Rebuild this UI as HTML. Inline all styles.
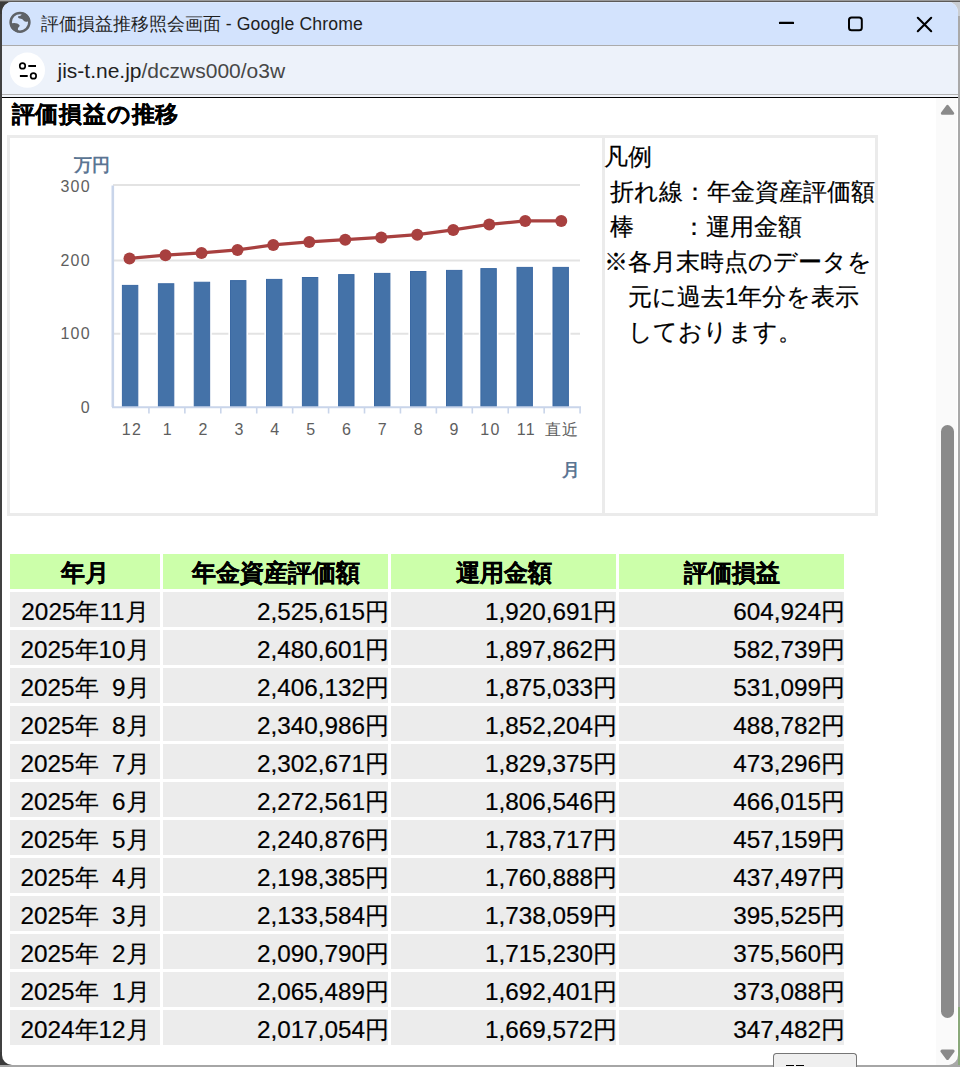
<!DOCTYPE html>
<html><head><meta charset="utf-8">
<style>
html,body{margin:0;padding:0;}
body{width:960px;height:1067px;overflow:hidden;position:relative;background:#a9a9a9;font-family:"Liberation Sans",sans-serif;color:#000;}
.abs{position:absolute;}
#bgleft{position:absolute;left:0;top:0;width:3px;height:1067px;background:#414141;}
#bgtop{position:absolute;left:0;top:0;width:960px;height:1px;background:#9a9a9a;}
#bgtop2{position:absolute;left:0;top:1px;width:960px;height:1px;background:#5c5a58;}
#bgbottom{position:absolute;left:0;top:1065px;width:960px;height:2px;background:#a6a6a6;}
#bggreen{position:absolute;left:958px;top:1007px;width:2px;height:58px;background:#8aa97a;}
#win{position:absolute;left:2px;top:2px;width:956px;height:1063px;background:#fff;border-radius:10px;overflow:hidden;}
#title{position:absolute;left:0;top:0;width:956px;height:43px;background:#d3e3fd;}
#title .hl{position:absolute;left:0;top:0;width:956px;height:1px;background:#dce9fd;}
#tsep{position:absolute;left:0;top:43px;width:956px;height:1px;background:#ababab;}
#addr{position:absolute;left:0;top:44px;width:956px;height:48px;background:#edf2fa;}
#asep{position:absolute;left:0;top:92px;width:956px;height:1px;background:#b3b3b3;}
#asep2{position:absolute;left:0;top:93px;width:956px;height:2px;background:#f1f4fa;}
#blk{position:absolute;left:0;top:95px;width:956px;height:1px;background:#000;}
.ttxt{position:absolute;left:38.6px;top:12px;font-size:17.65px;line-height:20px;color:#1f1f1f;white-space:nowrap;}
.url{position:absolute;left:55.5px;top:12.8px;font-size:21px;line-height:24px;color:#1f1f1f;white-space:nowrap;}
.url .g{color:#474747;}
#scroll{position:absolute;left:934px;top:96px;width:22px;height:967px;background:#fafafa;}
#thumb{position:absolute;left:939px;top:423px;width:13px;height:593px;background:#8a8a8a;border-radius:6.5px;}
/* page */
.h1{position:absolute;left:11.6px;top:100.2px;font-size:23.2px;letter-spacing:0.8px;line-height:28px;font-weight:bold;-webkit-text-stroke:0.25px #000;white-space:nowrap;}
.box{position:absolute;background:#ebebeb;}
.xl{position:absolute;top:419px;width:60px;text-align:center;font-size:16px;line-height:22px;color:#5e5e5e;letter-spacing:1.3px;text-indent:1.3px;}
.yl{position:absolute;width:41px;text-align:right;font-size:16px;line-height:20px;color:#5e5e5e;letter-spacing:1.3px;}
.unit{position:absolute;font-size:17.8px;line-height:20px;font-weight:bold;color:#5b7593;}
.leg{position:absolute;font-size:24px;-webkit-text-stroke:0.2px #000;line-height:26px;white-space:pre;}
.th{position:absolute;top:554px;height:35px;background:#ccffaa;font-weight:bold;font-size:24.4px;line-height:37.5px;-webkit-text-stroke:0.25px #000;text-align:center;white-space:nowrap;}
.td{position:absolute;height:35px;background:#ececec;-webkit-text-stroke:0.2px #000;font-size:24.3px;line-height:39.4px;white-space:nowrap;}
.td.c{text-align:center;}
.td.r{text-align:right;}
.td.r span{position:relative;left:1px;}
#btn{position:absolute;left:773px;top:1053px;width:84px;height:14px;border:1.25px solid #767676;border-bottom:none;border-radius:3.5px 3.5px 0 0;background:#efefef;box-sizing:border-box;overflow:hidden;}
</style></head><body>
<div id="bgleft"></div><div id="bgtop"></div><div id="bgtop2"></div><div id="bgbottom"></div><div id="bggreen"></div><div class="abs" style="left:946px;top:2px;width:14px;height:14px;background:#c9cdd2"></div><div class="abs" style="left:0;top:2px;width:12px;height:12px;background:#3a3a3a"></div><div class="abs" style="left:0;top:1052px;width:12px;height:13px;background:#3a3a3a"></div>
<div id="win">
  <div id="title"><div class="hl"></div>
    <svg class="abs" style="left:0;top:0" width="956" height="43">
      <!-- globe -->
      <g transform="translate(18,20.3) scale(1.03)">
        <circle cx="0" cy="0" r="9.1" fill="none" stroke="#5f6368" stroke-width="2.5"/>
        <path d="M-9.5,1.2 C-6,0 -2,0.5 -0.6,2.6 C0.4,4 -2,4.6 -2,6.5 L-2,9.8 C-6,9 -9,6 -9.5,1.2 Z" fill="#5f6368"/>
        <path d="M2,-9.8 C2,-7 0.8,-6 -1.6,-5.8 C-2.4,-5.5 -2.3,-3.8 0.8,-3.4 C3.5,-3 3.4,0 6.5,-0.6 C8,-1 9.4,-1.5 9.6,-3 C8.5,-6.5 6,-9.2 2,-9.8 Z" fill="#5f6368"/>
      </g>
      <!-- minimize -->
      <rect x="777" y="19.8" width="15" height="2.2" rx="0.6" fill="#000"/>
      <!-- maximize -->
      <rect x="847" y="15.5" width="12.8" height="12.8" rx="2.6" fill="none" stroke="#000" stroke-width="2"/>
      <!-- close -->
      <path d="M915.8,15.8 L929.2,29.2 M929.2,15.8 L915.8,29.2" stroke="#000" stroke-width="2.1" stroke-linecap="round"/>
    </svg>
    <div class="ttxt">評価損益推移照会画面<span style="letter-spacing:0.14px"> - Google Chrome</span></div>
  </div>
  <div id="tsep"></div>
  <div id="addr">
    <svg class="abs" style="left:0;top:0" width="100" height="48">
      <circle cx="25.4" cy="24.2" r="17.6" fill="#fff"/>
      <circle cx="20.5" cy="19.9" r="2.75" fill="none" stroke="#000" stroke-width="1.7"/>
      <line x1="26.3" y1="19.9" x2="34" y2="19.9" stroke="#000" stroke-width="2"/>
      <line x1="17.9" y1="29.9" x2="25.7" y2="29.9" stroke="#000" stroke-width="2"/>
      <circle cx="31.4" cy="29.9" r="2.75" fill="none" stroke="#000" stroke-width="1.7"/>
    </svg>
    <div class="url">jis-t.ne.jp<span class="g">/dczws000/o3w</span></div>
  </div>
  <div id="asep"></div><div id="asep2"></div><div id="blk"></div>
</div>
<!-- page content in page coords -->
<div class="h1">評価損益の推移</div>
<!-- chart box borders -->
<div class="box" style="left:7px;top:135px;width:871px;height:3px"></div>
<div class="box" style="left:7px;top:513px;width:871px;height:3px"></div>
<div class="box" style="left:7px;top:135px;width:3px;height:381px"></div>
<div class="box" style="left:875px;top:135px;width:3px;height:381px"></div>
<div class="box" style="left:602px;top:135px;width:3px;height:381px"></div>
<svg class="abs" style="left:0;top:0" width="960" height="1067">
<line x1="113" y1="185" x2="580" y2="185" stroke="#e3e3e3" stroke-width="2"/>
<line x1="113" y1="260.5" x2="580" y2="260.5" stroke="#e3e3e3" stroke-width="2"/>
<line x1="113" y1="333.75" x2="580" y2="333.75" stroke="#e3e3e3" stroke-width="2"/>
<rect x="120.30" y="283.29999999999995" width="19.599999999999998" height="123.20" fill="#fff"/>
<rect x="122.40" y="285.4" width="15.399999999999999" height="121.10" fill="#4472a8" stroke="#3b69a3" stroke-width="1"/>
<rect x="156.30" y="281.65" width="19.599999999999998" height="124.85" fill="#fff"/>
<rect x="158.40" y="283.75" width="15.399999999999999" height="122.75" fill="#4472a8" stroke="#3b69a3" stroke-width="1"/>
<rect x="192.15" y="280.15" width="19.599999999999998" height="126.35" fill="#fff"/>
<rect x="194.25" y="282.25" width="15.399999999999999" height="124.25" fill="#4472a8" stroke="#3b69a3" stroke-width="1"/>
<rect x="228.40" y="278.5" width="19.599999999999998" height="128.00" fill="#fff"/>
<rect x="230.50" y="280.6" width="15.399999999999999" height="125.90" fill="#4472a8" stroke="#3b69a3" stroke-width="1"/>
<rect x="264.40" y="277.29999999999995" width="19.599999999999998" height="129.20" fill="#fff"/>
<rect x="266.50" y="279.4" width="15.399999999999999" height="127.10" fill="#4472a8" stroke="#3b69a3" stroke-width="1"/>
<rect x="300.30" y="275.4" width="19.599999999999998" height="131.10" fill="#fff"/>
<rect x="302.40" y="277.5" width="15.399999999999999" height="129.00" fill="#4472a8" stroke="#3b69a3" stroke-width="1"/>
<rect x="336.50" y="272.5" width="19.599999999999998" height="134.00" fill="#fff"/>
<rect x="338.60" y="274.6" width="15.399999999999999" height="131.90" fill="#4472a8" stroke="#3b69a3" stroke-width="1"/>
<rect x="372.40" y="271.29999999999995" width="19.599999999999998" height="135.20" fill="#fff"/>
<rect x="374.50" y="273.4" width="15.399999999999999" height="133.10" fill="#4472a8" stroke="#3b69a3" stroke-width="1"/>
<rect x="408.40" y="269.4" width="19.599999999999998" height="137.10" fill="#fff"/>
<rect x="410.50" y="271.5" width="15.399999999999999" height="135.00" fill="#4472a8" stroke="#3b69a3" stroke-width="1"/>
<rect x="444.40" y="268.29999999999995" width="19.599999999999998" height="138.20" fill="#fff"/>
<rect x="446.50" y="270.4" width="15.399999999999999" height="136.10" fill="#4472a8" stroke="#3b69a3" stroke-width="1"/>
<rect x="478.80" y="266.5" width="19.599999999999998" height="140.00" fill="#fff"/>
<rect x="480.90" y="268.6" width="15.399999999999999" height="137.90" fill="#4472a8" stroke="#3b69a3" stroke-width="1"/>
<rect x="514.90" y="265.29999999999995" width="19.599999999999998" height="141.20" fill="#fff"/>
<rect x="517.00" y="267.4" width="15.399999999999999" height="139.10" fill="#4472a8" stroke="#3b69a3" stroke-width="1"/>
<rect x="550.90" y="265.29999999999995" width="19.599999999999998" height="141.20" fill="#fff"/>
<rect x="553.00" y="267.4" width="15.399999999999999" height="139.10" fill="#4472a8" stroke="#3b69a3" stroke-width="1"/>
<line x1="112.8" y1="185.5" x2="112.8" y2="407" stroke="#c9d5ea" stroke-width="2.6"/>
<line x1="112" y1="407.2" x2="581" y2="407.2" stroke="#c9d5ea" stroke-width="2"/>
<line x1="148.93" y1="407" x2="148.93" y2="413.5" stroke="#c9d5ea" stroke-width="1.6"/>
<line x1="184.86" y1="407" x2="184.86" y2="413.5" stroke="#c9d5ea" stroke-width="1.6"/>
<line x1="220.79" y1="407" x2="220.79" y2="413.5" stroke="#c9d5ea" stroke-width="1.6"/>
<line x1="256.72" y1="407" x2="256.72" y2="413.5" stroke="#c9d5ea" stroke-width="1.6"/>
<line x1="292.65" y1="407" x2="292.65" y2="413.5" stroke="#c9d5ea" stroke-width="1.6"/>
<line x1="328.58" y1="407" x2="328.58" y2="413.5" stroke="#c9d5ea" stroke-width="1.6"/>
<line x1="364.51" y1="407" x2="364.51" y2="413.5" stroke="#c9d5ea" stroke-width="1.6"/>
<line x1="400.44" y1="407" x2="400.44" y2="413.5" stroke="#c9d5ea" stroke-width="1.6"/>
<line x1="436.37" y1="407" x2="436.37" y2="413.5" stroke="#c9d5ea" stroke-width="1.6"/>
<line x1="472.30" y1="407" x2="472.30" y2="413.5" stroke="#c9d5ea" stroke-width="1.6"/>
<line x1="508.23" y1="407" x2="508.23" y2="413.5" stroke="#c9d5ea" stroke-width="1.6"/>
<line x1="544.16" y1="407" x2="544.16" y2="413.5" stroke="#c9d5ea" stroke-width="1.6"/>
<line x1="580.09" y1="407" x2="580.09" y2="413.5" stroke="#c9d5ea" stroke-width="1.6"/>
<path d="M129.5,258.4 L165.5,255.15 L201.5,252.9 L237.5,249.9 L273.25,244.9 L309.25,241.9 L345.25,239.65 L381.25,237.4 L417.25,234.65 L453.25,229.9 L489.25,224.4 L525.25,220.9 L561.25,220.9" fill="none" stroke="#a8403f" stroke-width="3.2" stroke-linejoin="round"/>
<circle cx="129.5" cy="258.4" r="6" fill="#a8403f"/>
<circle cx="165.5" cy="255.15" r="6" fill="#a8403f"/>
<circle cx="201.5" cy="252.9" r="6" fill="#a8403f"/>
<circle cx="237.5" cy="249.9" r="6" fill="#a8403f"/>
<circle cx="273.25" cy="244.9" r="6" fill="#a8403f"/>
<circle cx="309.25" cy="241.9" r="6" fill="#a8403f"/>
<circle cx="345.25" cy="239.65" r="6" fill="#a8403f"/>
<circle cx="381.25" cy="237.4" r="6" fill="#a8403f"/>
<circle cx="417.25" cy="234.65" r="6" fill="#a8403f"/>
<circle cx="453.25" cy="229.9" r="6" fill="#a8403f"/>
<circle cx="489.25" cy="224.4" r="6" fill="#a8403f"/>
<circle cx="525.25" cy="220.9" r="6" fill="#a8403f"/>
<circle cx="561.25" cy="220.9" r="6" fill="#a8403f"/>
</svg>
<div class="unit" style="left:74px;top:154.5px">万円</div>
<div class="yl" style="left:50px;top:177px">300</div>
<div class="yl" style="left:50px;top:251px">200</div>
<div class="yl" style="left:50px;top:324px">100</div>
<div class="yl" style="left:50px;top:398px">0</div>
<div class="xl" style="left:101.35px">12</div>
<div class="xl" style="left:137.20px">1</div>
<div class="xl" style="left:173.05px">2</div>
<div class="xl" style="left:208.90px">3</div>
<div class="xl" style="left:244.75px">4</div>
<div class="xl" style="left:280.60px">5</div>
<div class="xl" style="left:316.45px">6</div>
<div class="xl" style="left:352.30px">7</div>
<div class="xl" style="left:388.15px">8</div>
<div class="xl" style="left:424.00px">9</div>
<div class="xl" style="left:459.85px">10</div>
<div class="xl" style="left:495.70px">11</div>
<div class="xl" style="left:531.55px">直近</div>
<div class="unit" style="left:562px;top:460px">月</div>
<div class="leg" style="left:603.8px;top:144px">凡例</div>
<div class="leg" style="left:603.8px;top:179px"> 折れ線：年金資産評価額</div>
<div class="leg" style="left:603.8px;top:214px"> 棒　　：運用金額</div>
<div class="leg" style="left:603.8px;top:249px">※各月末時点のデータを</div>
<div class="leg" style="left:603.8px;top:284px">　元に過去1年分を表示</div>
<div class="leg" style="left:603.8px;top:319px">　しております。</div>
<!-- table -->
<div class="th" style="left:10px;width:150px">年月</div>
<div class="th" style="left:163px;width:225px">年金資産評価額</div>
<div class="th" style="left:391px;width:225px">運用金額</div>
<div class="th" style="left:619px;width:225px">評価損益</div>
<div class="td c" style="left:10px;top:592px;width:150px">2025年11月</div>
<div class="td r" style="left:163px;top:592px;width:225px"><span>2,525,615円</span></div>
<div class="td r" style="left:391px;top:592px;width:225px"><span>1,920,691円</span></div>
<div class="td r" style="left:619px;top:592px;width:225px"><span>604,924円</span></div>
<div class="td c" style="left:10px;top:630px;width:150px">2025年10月</div>
<div class="td r" style="left:163px;top:630px;width:225px"><span>2,480,601円</span></div>
<div class="td r" style="left:391px;top:630px;width:225px"><span>1,897,862円</span></div>
<div class="td r" style="left:619px;top:630px;width:225px"><span>582,739円</span></div>
<div class="td c" style="left:10px;top:668px;width:150px">2025年&nbsp;&nbsp;9月</div>
<div class="td r" style="left:163px;top:668px;width:225px"><span>2,406,132円</span></div>
<div class="td r" style="left:391px;top:668px;width:225px"><span>1,875,033円</span></div>
<div class="td r" style="left:619px;top:668px;width:225px"><span>531,099円</span></div>
<div class="td c" style="left:10px;top:706px;width:150px">2025年&nbsp;&nbsp;8月</div>
<div class="td r" style="left:163px;top:706px;width:225px"><span>2,340,986円</span></div>
<div class="td r" style="left:391px;top:706px;width:225px"><span>1,852,204円</span></div>
<div class="td r" style="left:619px;top:706px;width:225px"><span>488,782円</span></div>
<div class="td c" style="left:10px;top:744px;width:150px">2025年&nbsp;&nbsp;7月</div>
<div class="td r" style="left:163px;top:744px;width:225px"><span>2,302,671円</span></div>
<div class="td r" style="left:391px;top:744px;width:225px"><span>1,829,375円</span></div>
<div class="td r" style="left:619px;top:744px;width:225px"><span>473,296円</span></div>
<div class="td c" style="left:10px;top:782px;width:150px">2025年&nbsp;&nbsp;6月</div>
<div class="td r" style="left:163px;top:782px;width:225px"><span>2,272,561円</span></div>
<div class="td r" style="left:391px;top:782px;width:225px"><span>1,806,546円</span></div>
<div class="td r" style="left:619px;top:782px;width:225px"><span>466,015円</span></div>
<div class="td c" style="left:10px;top:820px;width:150px">2025年&nbsp;&nbsp;5月</div>
<div class="td r" style="left:163px;top:820px;width:225px"><span>2,240,876円</span></div>
<div class="td r" style="left:391px;top:820px;width:225px"><span>1,783,717円</span></div>
<div class="td r" style="left:619px;top:820px;width:225px"><span>457,159円</span></div>
<div class="td c" style="left:10px;top:858px;width:150px">2025年&nbsp;&nbsp;4月</div>
<div class="td r" style="left:163px;top:858px;width:225px"><span>2,198,385円</span></div>
<div class="td r" style="left:391px;top:858px;width:225px"><span>1,760,888円</span></div>
<div class="td r" style="left:619px;top:858px;width:225px"><span>437,497円</span></div>
<div class="td c" style="left:10px;top:896px;width:150px">2025年&nbsp;&nbsp;3月</div>
<div class="td r" style="left:163px;top:896px;width:225px"><span>2,133,584円</span></div>
<div class="td r" style="left:391px;top:896px;width:225px"><span>1,738,059円</span></div>
<div class="td r" style="left:619px;top:896px;width:225px"><span>395,525円</span></div>
<div class="td c" style="left:10px;top:934px;width:150px">2025年&nbsp;&nbsp;2月</div>
<div class="td r" style="left:163px;top:934px;width:225px"><span>2,090,790円</span></div>
<div class="td r" style="left:391px;top:934px;width:225px"><span>1,715,230円</span></div>
<div class="td r" style="left:619px;top:934px;width:225px"><span>375,560円</span></div>
<div class="td c" style="left:10px;top:972px;width:150px">2025年&nbsp;&nbsp;1月</div>
<div class="td r" style="left:163px;top:972px;width:225px"><span>2,065,489円</span></div>
<div class="td r" style="left:391px;top:972px;width:225px"><span>1,692,401円</span></div>
<div class="td r" style="left:619px;top:972px;width:225px"><span>373,088円</span></div>
<div class="td c" style="left:10px;top:1010px;width:150px">2024年12月</div>
<div class="td r" style="left:163px;top:1010px;width:225px"><span>2,017,054円</span></div>
<div class="td r" style="left:391px;top:1010px;width:225px"><span>1,669,572円</span></div>
<div class="td r" style="left:619px;top:1010px;width:225px"><span>347,482円</span></div>
<div id="btn"><div style="position:absolute;left:12px;top:10.5px;width:8px;height:1.2px;background:#000"></div><div style="position:absolute;left:21.5px;top:10.5px;width:8px;height:1.2px;background:#000"></div></div>
<!-- scrollbar -->
<div class="abs" style="left:936px;top:98px;width:21px;height:967px;background:#fafafa;border-bottom-right-radius:10px"></div>
<svg class="abs" style="left:936px;top:98px" width="22" height="967">
  <path d="M6.3,15.3 L11.5,8.4 L16.7,15.3 Z" fill="#8a8a8a" stroke="#8a8a8a" stroke-width="3" stroke-linejoin="round"/>
  <rect x="5" y="327" width="13" height="593" rx="6.5" fill="#8a8a8a"/>
  <path d="M5.9,953.1 L17.1,953.1 L11.5,960.5 Z" fill="#8a8a8a" stroke="#8a8a8a" stroke-width="3" stroke-linejoin="round"/>
</svg>
</body></html>
